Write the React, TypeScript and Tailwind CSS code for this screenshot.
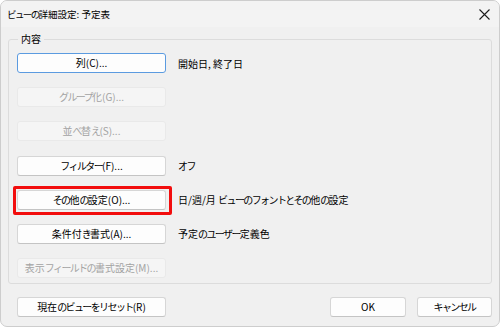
import type { ReactNode } from 'react';

// Meiryo UI-like look: kana runs are set a bit narrower than kanji
function JP({ text }: { text: string }) {
  const parts = text.split(/([\u3040-\u30ff]+)/).filter(Boolean);
  return (
    <>
      {parts.map((p, i) =>
        /[\u3040-\u30ff]/.test(p) ? (
          <span key={i} className="tracking-[-1.6px]">
            {p}
          </span>
        ) : (
          <span key={i}>{p}</span>
        )
      )}
    </>
  );
}

interface BtnProps {
  text: string;
  disabled?: boolean;
  focused?: boolean;
  className?: string;
}

function Btn({ text, disabled, focused, className = 'w-[149px]' }: BtnProps) {
  const base = 'h-[20px] rounded-[3px] flex items-center justify-center text-[10px] leading-none shrink-0 whitespace-nowrap';
  if (disabled) {
    return (
      <div className={`${base} ${className} bg-[#f5f5f5] border border-[#e9e9e9] text-[#a3a3a3]`}>
        <JP text={text} />
      </div>
    );
  }
  if (focused) {
    return (
      <div className={`${base} ${className} bg-[#fdfdfd] border-[1.5px] border-[#5b9be0] text-black`}>
        <JP text={text} />
      </div>
    );
  }
  return (
    <div className={`${base} ${className} bg-[#fdfdfd] border border-[#d6d6d6] border-b-[#c4c4c4] text-black`}>
      <JP text={text} />
    </div>
  );
}

function Row({ children, label }: { children: ReactNode; label?: string }) {
  return (
    <div className="flex items-center gap-[12px] h-[20px]">
      {children}
      {label && (
        <span className="text-[10px] text-black whitespace-nowrap">
          <JP text={label} />
        </span>
      )}
    </div>
  );
}

export default function App() {
  return (
    <div className="w-[500px] h-[327px] bg-white font-['Noto_Sans_CJK_JP','Noto_Sans',sans-serif]">
      <div className="w-[500px] h-[327px] bg-[#f0f0f0] border border-[#cdcdcd] rounded-[7px] flex flex-col overflow-hidden">
        {/* title bar */}
        <div className="h-[26px] bg-[#f3f3f3] flex items-center justify-between pl-[6px] pr-[9px] shrink-0">
          <span className="text-[9.5px] text-black whitespace-nowrap">
            <JP text="ビューの詳細設定: 予定表" />
          </span>
          <svg width="11" height="11" viewBox="0 0 11 11" className="mt-[1px]">
            <path d="M0.5 0.5 L10.5 10.5 M10.5 0.5 L0.5 10.5" stroke="#1b1b1b" strokeWidth="1.1" />
          </svg>
        </div>

        <fieldset className="mx-[7px] mt-[6px] h-[251px] border border-[#dcdcdc] rounded-[3px] px-[8px] pt-[8px] pb-[7px]">
          <legend className="ml-[1px] px-[3px] text-[10px] leading-[12px] text-black">内容</legend>
          <div className="flex flex-col gap-[14.2px]">
            <Row label="開始日, 終了日">
              <Btn focused text="列(C)..." />
            </Row>
            <Row>
              <Btn disabled text="グループ化(G)..." />
            </Row>
            <Row>
              <Btn disabled text="並べ替え(S)..." />
            </Row>
            <Row label="オフ">
              <Btn text="フィルター(F)..." />
            </Row>
            <Row label="日/週/月 ビューのフォントとその他の設定">
              <div className="relative">
                <Btn text="その他の設定(O)..." />
                <div className="absolute left-[-4px] top-[-4px] w-[159px] h-[29px] border-[3px] border-[#f20d0d] rounded-[2px]" />
              </div>
            </Row>
            <Row label="予定のユーザー定義色">
              <Btn text="条件付き書式(A)..." />
            </Row>
            <Row>
              <Btn disabled text="表示フィールドの書式設定(M)..." />
            </Row>
          </div>
        </fieldset>

        <div className="flex items-center mt-[13px] pl-[16px] pr-[7px]">
          <Btn text="現在のビューをリセット(R)" />
          <div className="flex-1" />
          <Btn className="w-[76px]" text="OK" />
          <Btn className="w-[75px] ml-[11px]" text="キャンセル" />
        </div>
      </div>
    </div>
  );
}
